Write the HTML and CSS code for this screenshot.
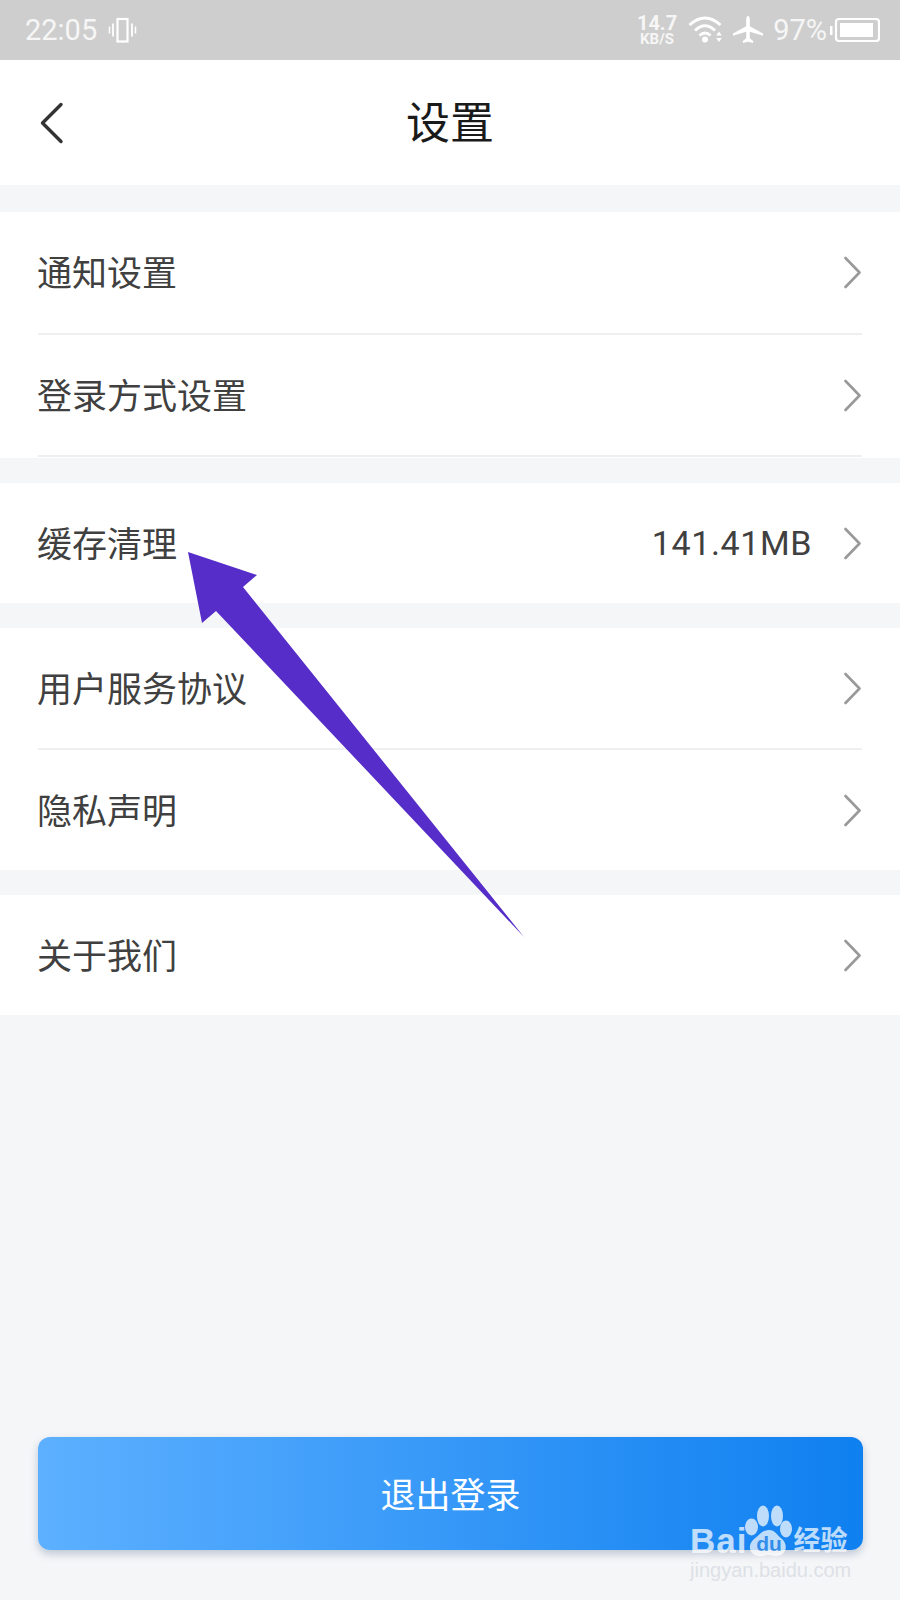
FILE: index.html
```html
<!DOCTYPE html>
<html lang="zh-CN">
<head>
	<meta charset="UTF-8">
	<title>设置</title>
	<link rel="stylesheet" href="styles.css">
</head>
<body>
	<div class="status">
		<div class="status-left">
			<span class="clock">22:05</span>
			<svg class="ico-vib" width="29" height="28" viewBox="0 0 29 28" fill="none" stroke="#fff">
				<rect x="9.500" y="3" width="10" height="22.500" stroke-width="2.200"/>
				<path d="M5 7.500v13M24 7.500v13" stroke-width="1.800"/>
				<path d="M1.500 10.500v7M27.500 10.500v7" stroke-width="1.500"/>
			</svg>
		</div>
		<div class="status-right">
			<div class="speed"><span>14.7</span><span class="speed-unit">KB/S</span></div>
			<svg class="ico-wifi" width="36" height="28" viewBox="0 0 36 28" fill="none" stroke="#fff" stroke-width="3">
				<path d="M1.500 9Q17-5 32.500 9"/>
				<path d="M7 14.500Q17 5 27 14.500"/>
				<path d="M11.500 19.500Q17 14.500 22.500 19.500"/>
				<circle cx="17" cy="23.500" r="3" fill="#fff" stroke="none"/>
				<path d="M31 15.500l-2.800 4h5.600zM31 26l-2.800-4h5.600z" fill="#fff" stroke="none"/>
			</svg>
			<svg class="ico-plane" width="30" height="28" viewBox="0 0 30 28" fill="#fff">
				<path d="M15 0c1 0 1.800 1.500 1.800 3.500v6.800L30 17.500v2.300l-13.200-4.100v6.600l3.400 2.600V27L15 25.700 9.800 27v-2.100l3.400-2.600v-6.600L0 19.800v-2.300l13.200-7.200V3.500C13.200 1.500 14 0 15 0z"/>
			</svg>
			<span class="batt-num">97%</span>
			<svg class="ico-batt" width="50" height="28" viewBox="0 0 50 28" fill="none">
				<rect x="0" y="10" width="2.500" height="9" fill="#fff"/>
				<rect x="6" y="3" width="43" height="22" rx="3" stroke="#fff" stroke-width="2.200"/>
				<rect x="10" y="7" width="33" height="14" fill="#fff"/>
			</svg>
		</div>
	</div>

	<div class="header">
		<svg class="back" width="26" height="42" viewBox="0 0 26 42" fill="none" stroke="#333" stroke-width="3.400" stroke-linecap="round" stroke-linejoin="round">
			<path d="M22 2.500L3.500 21 22 39.500"/>
		</svg>
		<h1>设置</h1>
	</div>

	<div class="group group-first">
		<div class="row line">
			<span class="label">通知设置</span>
			<svg class="more" width="19" height="33" viewBox="0 0 19 33" fill="none" stroke="#999" stroke-width="2.600" stroke-linecap="round" stroke-linejoin="round"><path d="M3.500 2l14 14.500L3.500 31"/></svg>
		</div>
		<div class="row line">
			<span class="label">登录方式设置</span>
			<svg class="more" width="19" height="33" viewBox="0 0 19 33" fill="none" stroke="#999" stroke-width="2.600" stroke-linecap="round" stroke-linejoin="round"><path d="M3.500 2l14 14.500L3.500 31"/></svg>
		</div>
	</div>

	<div class="group">
		<div class="row">
			<span class="label">缓存清理</span>
			<span class="value">141.41MB</span>
			<svg class="more" width="19" height="33" viewBox="0 0 19 33" fill="none" stroke="#999" stroke-width="2.600" stroke-linecap="round" stroke-linejoin="round"><path d="M3.500 2l14 14.500L3.500 31"/></svg>
		</div>
	</div>

	<div class="group">
		<div class="row line">
			<span class="label">用户服务协议</span>
			<svg class="more" width="19" height="33" viewBox="0 0 19 33" fill="none" stroke="#999" stroke-width="2.600" stroke-linecap="round" stroke-linejoin="round"><path d="M3.500 2l14 14.500L3.500 31"/></svg>
		</div>
		<div class="row">
			<span class="label">隐私声明</span>
			<svg class="more" width="19" height="33" viewBox="0 0 19 33" fill="none" stroke="#999" stroke-width="2.600" stroke-linecap="round" stroke-linejoin="round"><path d="M3.500 2l14 14.500L3.500 31"/></svg>
		</div>
	</div>

	<div class="group">
		<div class="row">
			<span class="label">关于我们</span>
			<svg class="more" width="19" height="33" viewBox="0 0 19 33" fill="none" stroke="#999" stroke-width="2.600" stroke-linecap="round" stroke-linejoin="round"><path d="M3.500 2l14 14.500L3.500 31"/></svg>
		</div>
	</div>

	<div class="logout">退出登录</div>

	<!-- annotation drawn on top of the screenshot -->
	<svg class="arrow" width="900" height="1600" viewBox="0 0 900 1600">
		<path d="M188 552L257 575 243 587 524 937 216 611 202 623z" fill="#562dc8"/>
	</svg>

	<div class="mark">
		<div class="mark-top">
			<span class="mark-bai">Bai</span>
			<div class="paw">
				<svg width="47" height="53" viewBox="0 0 47 53" fill="#fff">
					<ellipse cx="6.500" cy="22" rx="6.500" ry="8.500"/>
					<ellipse cx="18" cy="11" rx="6" ry="10.500"/>
					<ellipse cx="32" cy="11" rx="6" ry="10.500"/>
					<ellipse cx="41" cy="24" rx="6" ry="8.500"/>
					<path d="M24 25c6 0 8 5 13 9 7 6 4 18-7 17-3 0-4-1-7-1s-5 2-9 1C4 50 2 40 9 34c6-4 8-9 15-9z"/>
				</svg>
				<span class="paw-du">du</span>
			</div>
			<span class="mark-cn">经验</span>
		</div>
		<div class="mark-url">jingyan.baidu.com</div>
	</div>
</body>
</html>
```

FILE: styles.css
```css
*{
	margin: 0;
	padding: 0;
	box-sizing: border-box;
}
html,body{
	height: 100%;
}
body{
	width: 900px;
	height: 1600px;
	position: relative;
	overflow: hidden;
	display: flex;
	flex-direction: column;
	background-color: #f5f6f8;
	font-family: "Noto Sans CJK SC", "Noto Sans", sans-serif;
}

/* status bar */
.status{
	height: 60px;
	flex: none;
	display: flex;
	align-items: center;
	justify-content: space-between;
	padding: 0 20px 0 25px;
	background-color: #cecece;
	color: #f6f6f6;
	font-family: Roboto, sans-serif;
}
.status-left,.status-right{
	display: flex;
	align-items: center;
}
.clock{
	font-size: 29px;
}
.ico-vib{
	margin-left: 11px;
}
.speed{
	display: flex;
	flex-direction: column;
	align-items: center;
	font-size: 20px;
	line-height: 17px;
	font-weight: 700;
}
.speed-unit{
	font-size: 15px;
	line-height: 14px;
}
.ico-wifi{
	margin-left: 11px;
}
.ico-plane{
	margin-left: 9px;
}
.batt-num{
	margin-left: 10px;
	font-size: 29px;
}
.ico-batt{
	margin-left: 3px;
}

/* title */
.header{
	height: 125px;
	flex: none;
	display: flex;
	align-items: center;
	justify-content: center;
	position: relative;
	padding-bottom: 5px;
	background-color: #fff;
}
.header h1{
	font-size: 44px;
	font-weight: 400;
	color: #1a1a1a;
}
.back{
	position: absolute;
	left: 39px;
	top: 42px;
}

/* list */
.group{
	margin-top: 25px;
	padding: 0 38px;
	background-color: #fff;
}
.group-first{
	margin-top: 27px;
	padding-bottom: 1px;
}
.row{
	height: 120px;
	display: flex;
	align-items: center;
}
.row.line{
	height: 122px;
	border-bottom: 2px solid #eeeff1;
}
.group-first .row:first-child{
	height: 123px;
}
.label{
	flex: 1;
	margin-left: -1px;
	padding-bottom: 4px;
	font-size: 35px;
	color: #404040;
}
.value{
	margin-right: 30px;
	font-family: Roboto, sans-serif;
	font-size: 34px;
	letter-spacing: 0.6px;
	color: #404040;
}
.more{
	flex: none;
	margin-right: 1px;
}

/* button */
.logout{
	height: 113px;
	flex: none;
	margin: auto 37px 50px 38px;
	display: flex;
	align-items: center;
	justify-content: center;
	padding-bottom: 2px;
	border-radius: 12px;
	background: linear-gradient(90deg, #5db0ff, #0f80f0);
	box-shadow: 0 4px 8px rgba(60,90,130,.3);
	font-size: 35px;
	color: #fff;
}

/* overlays */
.arrow{
	position: absolute;
	left: 0;
	top: 0;
}
.mark{
	position: absolute;
	left: 690px;
	top: 1505px;
	width: 170px;
	color: #fff;
}
.mark-top{
	display: flex;
	align-items: flex-start;
	height: 50px;
}
.mark-bai{
	margin-top: 20px;
	font-family: "Liberation Sans", sans-serif;
	font-size: 35px;
	font-weight: 700;
	line-height: 32px;
	letter-spacing: 1px;
	opacity: .72;
}
.paw{
	width: 47px;
	height: 53px;
	position: relative;
	margin-left: -2px;
	opacity: .72;
}
.paw-du{
	position: absolute;
	left: 0;
	right: 0;
	top: 28px;
	text-align: center;
	font-family: "Liberation Sans", sans-serif;
	font-size: 21px;
	font-weight: 700;
	line-height: 22px;
	color: #3d90e8;
}
.mark-cn{
	margin-top: 18px;
	margin-left: 1px;
	font-size: 27px;
	font-weight: 700;
	line-height: 32px;
	opacity: .72;
	white-space: nowrap;
}
.mark-url{
	margin-top: 3px;
	font-family: "Liberation Sans", sans-serif;
	font-size: 20px;
	line-height: 24px;
	color: #dde1e6;
	white-space: nowrap;
}
```
